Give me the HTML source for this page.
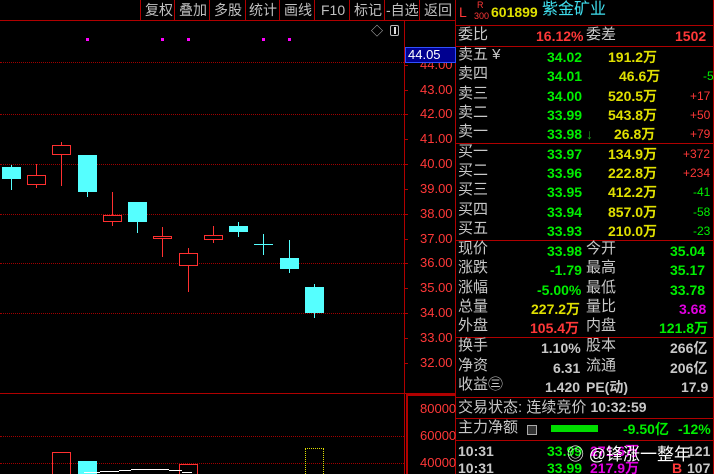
<!DOCTYPE html><html><head><meta charset="utf-8"><style>
*{margin:0;padding:0;box-sizing:border-box}
html{width:714px;height:474px;overflow:hidden;background:#000}
body{width:714px;height:474px;background:#000;overflow:hidden;position:relative;font-family:"Liberation Sans","Noto Sans CJK SC",sans-serif;font-size:13px;color:#c0c0c0}
.a{position:absolute;white-space:nowrap;line-height:14px}
.n{font-weight:bold;font-size:14px}
.hl{position:absolute;height:1px;background:#b00000}
.vl{position:absolute;width:1px;background:#b00000}
.dot{position:absolute;left:0;width:404px;height:0;border-top:1px dotted #a00000}
.c{position:absolute;background:#55ffff}
.r{position:absolute;border:1px solid #ff3030}
.w{position:absolute;width:1px}
.g{color:#00ee00}.y{color:#e0e000}.rd{color:#ff3838}.m{color:#e000e0}.gr{color:#c8c8c8}
.ax{position:absolute;left:420px;color:#ff3838;font-size:13px;line-height:12px}
.tk{position:absolute;left:404px;width:4px;height:1px;background:#b00000}
.l{font-size:15px}
</style></head><body>
<div class="hl" style="left:0;top:20px;width:455px"></div>
<div class="a" style="left:145px;top:3px;font-size:14px">复权</div>
<div class="a" style="left:179px;top:3px;font-size:14px">叠加</div>
<div class="a" style="left:214px;top:3px;font-size:14px">多股</div>
<div class="a" style="left:249px;top:3px;font-size:14px">统计</div>
<div class="a" style="left:284px;top:3px;font-size:14px">画线</div>
<div class="a" style="left:321px;top:3px;font-size:14px">F10</div>
<div class="a" style="left:354px;top:3px;font-size:14px">标记</div>
<div class="a" style="left:386px;top:3px;font-size:14px">-自选</div>
<div class="a" style="left:424px;top:3px;font-size:14px">返回</div>
<div class="vl" style="left:140px;top:0;height:20px"></div><div class="vl" style="left:174px;top:0;height:20px"></div><div class="vl" style="left:209px;top:0;height:20px"></div><div class="vl" style="left:245px;top:0;height:20px"></div><div class="vl" style="left:279px;top:0;height:20px"></div><div class="vl" style="left:314px;top:0;height:20px"></div><div class="vl" style="left:349px;top:0;height:20px"></div><div class="vl" style="left:384px;top:0;height:20px"></div><div class="vl" style="left:419px;top:0;height:20px"></div>
<div class="vl" style="left:455px;top:0;height:474px"></div>
<div class="vl" style="left:404px;top:20px;height:454px"></div>
<div class="hl" style="left:0;top:393px;width:455px"></div>
<div class="vl" style="left:406px;top:394px;height:80px;width:2px"></div>
<div class="hl" style="left:406px;top:394px;width:49px;height:2px"></div>
<div class="a" style="left:371px;top:24px;font-size:12px">◇</div>
<div style="position:absolute;left:390px;top:25px;width:9px;height:11px;border:1px solid #bbb;border-radius:2px"><div style="position:absolute;left:3px;top:1px;width:2px;height:7px;background:#ddd"></div></div>
<div style="position:absolute;left:86px;top:38px;width:3px;height:3px;background:#f0f"></div>
<div style="position:absolute;left:161px;top:38px;width:3px;height:3px;background:#f0f"></div>
<div style="position:absolute;left:187px;top:38px;width:3px;height:3px;background:#f0f"></div>
<div style="position:absolute;left:262px;top:38px;width:3px;height:3px;background:#f0f"></div>
<div style="position:absolute;left:288px;top:38px;width:3px;height:3px;background:#f0f"></div>
<div class="dot" style="top:62px"></div><div class="dot" style="top:114px"></div><div class="dot" style="top:164px"></div><div class="dot" style="top:214px"></div><div class="dot" style="top:263px"></div><div class="dot" style="top:313px"></div>
<div class="dot" style="top:436px"></div><div class="dot" style="top:463px"></div>
<div class="ax" style="top:59px">44.00</div><div class="ax" style="top:84px">43.00</div><div class="ax" style="top:108px">42.00</div><div class="ax" style="top:133px">41.00</div><div class="ax" style="top:158px">40.00</div><div class="ax" style="top:183px">39.00</div><div class="ax" style="top:208px">38.00</div><div class="ax" style="top:233px">37.00</div><div class="ax" style="top:257px">36.00</div><div class="ax" style="top:282px">35.00</div><div class="ax" style="top:307px">34.00</div><div class="ax" style="top:332px">33.00</div><div class="ax" style="top:357px">32.00</div>
<div class="tk" style="top:65px"></div><div class="tk" style="top:90px"></div><div class="tk" style="top:114px"></div><div class="tk" style="top:139px"></div><div class="tk" style="top:164px"></div><div class="tk" style="top:189px"></div><div class="tk" style="top:214px"></div><div class="tk" style="top:239px"></div><div class="tk" style="top:263px"></div><div class="tk" style="top:288px"></div><div class="tk" style="top:313px"></div><div class="tk" style="top:338px"></div><div class="tk" style="top:363px"></div>
<div class="ax" style="top:403px">80000</div><div class="ax" style="top:430px">60000</div><div class="ax" style="top:457px">40000</div>
<div style="position:absolute;left:405px;top:47px;width:51px;height:16px;background:#000090;border:1px solid #3050ff;color:#fff;font-size:13px;line-height:14px;padding-left:2px">44.05</div>
<div class="w" style="left:11px;top:165px;height:25px;background:#55ffff"></div><div class="c" style="left:2px;top:167px;width:19px;height:12px"></div>
<div class="w" style="left:36px;top:164px;height:24px;background:#ff3030"></div><div class="r" style="left:27px;top:175px;width:19px;height:10px;background:#000"></div>
<div class="w" style="left:61px;top:142px;height:44px;background:#ff3030"></div><div class="r" style="left:52px;top:145px;width:19px;height:10px;background:#000"></div>
<div class="w" style="left:87px;top:155px;height:42px;background:#55ffff"></div><div class="c" style="left:78px;top:155px;width:19px;height:37px"></div>
<div class="w" style="left:112px;top:192px;height:34px;background:#ff3030"></div><div class="r" style="left:103px;top:215px;width:19px;height:7px;background:#000"></div>
<div class="w" style="left:137px;top:202px;height:31px;background:#55ffff"></div><div class="c" style="left:128px;top:202px;width:19px;height:20px"></div>
<div class="w" style="left:162px;top:227px;height:30px;background:#ff3030"></div><div class="r" style="left:153px;top:236px;width:19px;height:3px;background:#000"></div>
<div class="w" style="left:188px;top:248px;height:44px;background:#ff3030"></div><div class="r" style="left:179px;top:253px;width:19px;height:13px;background:#000"></div>
<div class="w" style="left:213px;top:226px;height:17px;background:#ff3030"></div><div class="r" style="left:204px;top:235px;width:19px;height:5px;background:#000"></div>
<div class="w" style="left:238px;top:222px;height:15px;background:#55ffff"></div><div class="c" style="left:229px;top:226px;width:19px;height:6px"></div>
<div class="w" style="left:263px;top:234px;height:21px;background:#55ffff"></div><div class="c" style="left:254px;top:244px;width:19px;height:1px"></div>
<div class="w" style="left:289px;top:240px;height:33px;background:#55ffff"></div><div class="c" style="left:280px;top:258px;width:19px;height:11px"></div>
<div class="w" style="left:314px;top:284px;height:34px;background:#55ffff"></div><div class="c" style="left:305px;top:287px;width:19px;height:26px"></div>
<div style="position:absolute;left:52px;top:452px;width:19px;height:22px;border:1px solid #ff3030;border-bottom:none"></div>
<div class="c" style="left:78px;top:461px;width:19px;height:13px"></div>
<div style="position:absolute;left:179px;top:464px;width:19px;height:10px;border:1px solid #ff3030;border-bottom:none"></div>
<div style="position:absolute;left:305px;top:448px;width:19px;height:26px;border:1px dotted #e0e000;border-bottom:none"></div>
<div style="position:absolute;left:84px;top:472px;width:16px;height:1px;background:#fff"></div>
<div style="position:absolute;left:100px;top:471px;width:19px;height:1px;background:#fff"></div>
<div style="position:absolute;left:119px;top:470px;width:12px;height:1px;background:#fff"></div>
<div style="position:absolute;left:131px;top:469px;width:38px;height:1px;background:#fff"></div>
<div style="position:absolute;left:169px;top:470px;width:13px;height:1px;background:#fff"></div>
<div style="position:absolute;left:182px;top:472px;width:10px;height:1px;background:#fff"></div>
<div class="a rd" style="left:459px;top:5px;font-size:14px">L</div>
<div class="a rd" style="left:477px;top:1px;font-size:9px;line-height:9px">R</div>
<div class="a rd" style="left:474px;top:11px;font-size:9px;line-height:10px">300</div>
<div class="a y" style="left:491px;top:5px;font-weight:bold;font-size:14px">601899</div>
<div class="a" style="left:542px;top:3px;color:#40e0f0;font-size:16px">紫金矿业</div>
<div class="hl" style="left:455px;top:25px;width:259px"></div>
<div class="a gr l" style="left:458px;top:28px">委比</div>
<div class="a rd n" style="left:536px;top:29px">16.12%</div>
<div class="a gr l" style="left:586px;top:28px">委差</div>
<div class="a rd n" style="left:675px;top:29px">1502</div>
<div class="hl" style="left:455px;top:46px;width:259px"></div>
<div class="hl" style="left:455px;top:143px;width:259px"></div>
<div class="hl" style="left:455px;top:240px;width:259px"></div>
<div class="hl" style="left:455px;top:337px;width:259px"></div>
<div class="hl" style="left:455px;top:397px;width:259px"></div>
<div class="hl" style="left:455px;top:418px;width:259px"></div>
<div class="hl" style="left:455px;top:440px;width:259px"></div>
<div class="vl" style="left:713px;top:0;height:474px"></div>
<div class="a gr l" style="left:458px;top:48px">卖五 ¥</div><div class="a g n" style="left:547px;top:50px">34.02</div><div class="a y n" style="left:608px;top:50px">191.2万</div>
<div class="a gr l" style="left:458px;top:67px">卖四</div><div class="a g n" style="left:547px;top:69px">34.01</div><div class="a y n" style="left:619px;top:69px">46.6万</div><div class="a g" style="left:703px;top:69px;font-size:12px">-5</div>
<div class="a gr l" style="left:458px;top:87px">卖三</div><div class="a g n" style="left:547px;top:89px">34.00</div><div class="a y n" style="left:608px;top:89px">520.5万</div><div class="a rd" style="left:690px;top:89px;font-size:12px">+17</div>
<div class="a gr l" style="left:458px;top:106px">卖二</div><div class="a g n" style="left:547px;top:108px">33.99</div><div class="a y n" style="left:608px;top:108px">543.8万</div><div class="a rd" style="left:690px;top:108px;font-size:12px">+50</div>
<div class="a gr l" style="left:458px;top:125px">卖一</div><div class="a g n" style="left:547px;top:127px">33.98 <span style="color:#20a020">↓</span></div><div class="a y n" style="left:614px;top:127px">26.8万</div><div class="a rd" style="left:690px;top:127px;font-size:12px">+79</div>
<div class="a gr l" style="left:458px;top:145px">买一</div><div class="a g n" style="left:547px;top:147px">33.97</div><div class="a y n" style="left:608px;top:147px">134.9万</div><div class="a rd" style="left:683px;top:147px;font-size:12px">+372</div>
<div class="a gr l" style="left:458px;top:164px">买二</div><div class="a g n" style="left:547px;top:166px">33.96</div><div class="a y n" style="left:608px;top:166px">222.8万</div><div class="a rd" style="left:683px;top:166px;font-size:12px">+234</div>
<div class="a gr l" style="left:458px;top:183px">买三</div><div class="a g n" style="left:547px;top:185px">33.95</div><div class="a y n" style="left:608px;top:185px">412.2万</div><div class="a g" style="left:693px;top:185px;font-size:12px">-41</div>
<div class="a gr l" style="left:458px;top:203px">买四</div><div class="a g n" style="left:547px;top:205px">33.94</div><div class="a y n" style="left:608px;top:205px">857.0万</div><div class="a g" style="left:693px;top:205px;font-size:12px">-58</div>
<div class="a gr l" style="left:458px;top:222px">买五</div><div class="a g n" style="left:547px;top:224px">33.93</div><div class="a y n" style="left:608px;top:224px">210.0万</div><div class="a g" style="left:693px;top:224px;font-size:12px">-23</div>
<div class="a gr l" style="left:458px;top:242px">现价</div><div class="a g n" style="left:547px;top:244px">33.98</div><div class="a gr l" style="left:586px;top:242px">今开</div><div class="a g n" style="left:670px;top:244px">35.04</div>
<div class="a gr l" style="left:458px;top:261px">涨跌</div><div class="a g n" style="left:550px;top:263px">-1.79</div><div class="a gr l" style="left:586px;top:261px">最高</div><div class="a g n" style="left:670px;top:263px">35.17</div>
<div class="a gr l" style="left:458px;top:281px">涨幅</div><div class="a g n" style="left:537px;top:283px">-5.00%</div><div class="a gr l" style="left:586px;top:281px">最低</div><div class="a g n" style="left:670px;top:283px">33.78</div>
<div class="a gr l" style="left:458px;top:300px">总量</div><div class="a y n" style="left:531px;top:302px">227.2万</div><div class="a gr l" style="left:586px;top:300px">量比</div><div class="a m n" style="left:679px;top:302px">3.68</div>
<div class="a gr l" style="left:458px;top:319px">外盘</div><div class="a rd n" style="left:530px;top:321px">105.4万</div><div class="a gr l" style="left:586px;top:319px">内盘</div><div class="a g n" style="left:659px;top:321px">121.8万</div>
<div class="a gr l" style="left:458px;top:339px">换手</div><div class="a gr n" style="left:541px;top:341px">1.10%</div><div class="a gr l" style="left:586px;top:339px">股本</div><div class="a gr n" style="left:670px;top:341px">266亿</div>
<div class="a gr l" style="left:458px;top:359px">净资</div><div class="a gr n" style="left:553px;top:361px">6.31</div><div class="a gr l" style="left:586px;top:359px">流通</div><div class="a gr n" style="left:670px;top:361px">206亿</div>
<div class="a gr l" style="left:458px;top:378px">收益㊂</div><div class="a gr n" style="left:545px;top:380px">1.420</div><div class="a gr n" style="left:586px;top:380px">PE(动)</div><div class="a gr n" style="left:681px;top:380px">17.9</div>
<div class="a gr l" style="left:458px;top:400px">交易状态: 连续竞价 <b style="font-size:14px">10:32:59</b></div>
<div class="a gr l" style="left:458px;top:421px">主力净额</div>
<div style="position:absolute;left:527px;top:425px;width:10px;height:10px;border:1px solid #aaa;background:#333"></div>
<div style="position:absolute;left:551px;top:425px;width:47px;height:7px;background:#00dd00"></div>
<div class="a g n" style="left:623px;top:422px">-9.50亿</div><div class="a g n" style="left:678px;top:422px">-12%</div>
<div class="a gr n" style="left:458px;top:444px">10:31</div><div class="a g n" style="left:547px;top:444px">33.99</div><div class="a m n" style="left:590px;top:444px">271.6万</div><div class="a gr n" style="left:687px;top:444px">121</div>
<div class="a gr n" style="left:458px;top:461px">10:31</div><div class="a g n" style="left:547px;top:461px">33.99</div><div class="a m n" style="left:590px;top:461px">217.9万</div><div class="a rd n" style="left:672px;top:461px">B</div><div class="a gr n" style="left:687px;top:461px">107</div>
<div class="a" style="left:567px;top:446px;font-size:17px;color:#fff;line-height:18px">◎ @锋涨一整年</div>
</body></html>
